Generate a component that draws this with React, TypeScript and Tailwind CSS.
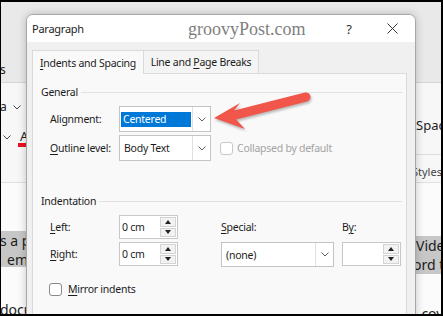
import React from 'react';

const Chevron = ({ color = '#5f5f5f' }: { color?: string }) => (
  <svg width="8" height="5" viewBox="0 0 8 5">
    <path d="M0.5 0.5 L4 4 L7.5 0.5" fill="none" stroke={color} strokeWidth="1" />
  </svg>
);

const Key = ({ children }: { children: React.ReactNode }) => (
  <span className="underline decoration-1 underline-offset-2">{children}</span>
);

const Dropdown = ({ value, width, selected }: { value: string; width: string; selected?: boolean }) => (
  <div className={`flex h-full ${width} border border-[#c4c4c4] bg-white`}>
    <div className="flex flex-1 items-center px-[1px]">
      {selected ? (
        <span className="flex h-[15px] w-full items-center bg-[#0078d7] pl-[2px] text-white">{value}</span>
      ) : (
        <span className="pl-[3px]">{value}</span>
      )}
    </div>
    <div className="flex w-[18px] items-center justify-center border-l border-[#e0e0e0]">
      <Chevron />
    </div>
  </div>
);

const Spin = ({ value }: { value: string }) => (
  <div className="flex h-[24px] w-[59px] border border-[#c8c8c8] bg-white">
    <div className="flex flex-1 items-center pl-[2px]">{value}</div>
    <div className="flex w-[18px] flex-col gap-[1px] p-[1px]">
      <div className="flex flex-1 items-center justify-center border border-[#d4d4d4] bg-[#f2f2f2]">
        <svg width="6" height="4" viewBox="0 0 6 4">
          <path d="M0 4 L3 0 L6 4 Z" fill="#222" />
        </svg>
      </div>
      <div className="flex flex-1 items-center justify-center border border-[#d4d4d4] bg-[#f2f2f2]">
        <svg width="6" height="4" viewBox="0 0 6 4">
          <path d="M0 0 L3 4 L6 0 Z" fill="#222" />
        </svg>
      </div>
    </div>
  </div>
);

const Checkbox = ({ disabled }: { disabled?: boolean }) => (
  <div
    className={`h-[13px] w-[13px] shrink-0 rounded-[3px] border bg-white ${disabled ? 'border-[#c8c8c8]' : 'border-[#8a8a8a]'}`}
  />
);

export default function App() {
  return (
    <div className="relative h-[316px] w-[443px] overflow-hidden border-t-2 border-r-2 border-b-2 border-l border-black bg-white font-['Noto_Sans',sans-serif] text-[#1c1c1c]">
      {/* Word window behind the dialog */}
      <div className="flex h-full flex-col">
        <div className="flex h-[81px] shrink-0 justify-between border-b border-[#d6d6d6] bg-[#e9e9e9] pt-[60px] text-[12px] leading-[16px]">
          <div className="w-[25px]">
            <span className="-ml-[1px]">s</span>
          </div>
          <div className="w-[26px]" />
        </div>

        <div className="flex h-[100px] shrink-0 justify-between border-b border-[#e0e0e0] bg-[#f7f7f7] text-[12px] leading-[16px]">
          <div className="flex w-[25px] flex-col pt-[16px]">
            <div className="flex items-center">
              <span className="-ml-[1px]">a</span>
              <span className="ml-[6px]">
                <Chevron color="#444" />
              </span>
            </div>
            <div className="mt-[14px] flex items-start">
              <span className="mt-[6px] ml-[2px]">
                <Chevron color="#444" />
              </span>
              <div className="ml-[9px] flex flex-col items-start">
                <span className="text-[13px] leading-[14px]">A</span>
                <div className="-ml-[2px] h-[4px] w-[12px] bg-[#e81123]" />
              </div>
            </div>
          </div>
          <div className="flex w-[26px] flex-col pt-[34px]">
            <span className="pl-[1px] text-[13px] leading-[16px] whitespace-nowrap">Spac</span>
            <div className="mt-[21px] h-px bg-[#dcdcdc]" />
            <span className="mt-[10px] -ml-[3px] text-[11px] leading-[14px] text-[#444]">Styles</span>
          </div>
        </div>

        <div className="flex flex-1 justify-between bg-[#fbfbfb] text-[14px] leading-[19px]">
          <div className="flex w-[25px] flex-col pt-[48px]">
            <div className="flex h-[36px] flex-col bg-[#c7c7c7] whitespace-nowrap">
              <span className="-ml-[1px]">s a p</span>
              <span className="pl-[6px]">em</span>
            </div>
            <span className="mt-[33px] -ml-[1px]">docu</span>
          </div>
          <div className="flex w-[26px] flex-col pt-[53px]">
            <div className="flex h-[38px] flex-col justify-center bg-[#c7c7c7] whitespace-nowrap">
              <span className="pl-[1px]">Vide</span>
              <span className="-ml-[2px]">ord t</span>
            </div>
            <span className="mt-[30px] -ml-[1px] whitespace-nowrap">, cov</span>
          </div>
        </div>
      </div>

      {/* Paragraph dialog */}
      <div className="absolute top-[12px] left-[25px] flex h-[330px] w-[390px] flex-col overflow-hidden rounded-t-[7px] border border-[#a8a8a8] bg-[#f0f0f0] text-[10.5px] leading-[14px] tracking-[-0.25px] shadow-[0_0_8px_rgba(0,0,0,0.22)]">
        <div className="flex h-[27px] shrink-0 items-center bg-white pl-[5px]">
          <span className="w-[156px] text-[11px]">Paragraph</span>
          <span className="font-['Liberation_Serif',serif] text-[18px] tracking-normal text-[#7f7f7f]">
            groovyPost.com
          </span>
          <div className="ml-auto flex h-full items-center">
            <span className="flex w-[40px] justify-center text-[13px] text-[#333]">?</span>
            <span className="flex w-[46px] justify-center">
              <svg width="11" height="11" viewBox="0 0 11 11">
                <path d="M0.5 0.5 L10.5 10.5 M10.5 0.5 L0.5 10.5" stroke="#333" strokeWidth="1" />
              </svg>
            </span>
          </div>
        </div>

        <div className="flex shrink-0 flex-col px-[5px] pt-[8px]">
          <div className="flex h-[24px] shrink-0">
            <div className="relative z-10 flex h-[24px] w-[112px] items-center justify-center border-t border-r border-l border-[#dadada] bg-[#f9f9f9]">
              <span>
                <Key>I</Key>ndents and Spacing
              </span>
            </div>
            <div className="flex h-[23px] w-[115px] items-center justify-center border-t border-r border-[#dadada] bg-[#f4f4f4]">
              <span>
                Line and <Key>P</Key>age Breaks
              </span>
            </div>
          </div>

          <div className="-mt-px flex h-[270px] w-[375px] shrink-0 flex-col border border-[#dadada] bg-[#f9f9f9] pr-[4px] pl-[8px]">
            {/* General */}
            <div className="mt-[11px] flex h-[14px] items-center gap-[3px]">
              <span>General</span>
              <div className="h-px flex-1 bg-[#e2e2e2]" />
            </div>
            <div className="mt-[7px] flex h-[26px] items-center pl-[9px]">
              <span className="w-[69px]">Alignment:</span>
              <Dropdown value="Centered" width="w-[92px]" selected />
            </div>
            <div className="mt-[3px] flex h-[26px] items-center pl-[9px]">
              <span className="w-[69px]">
                <Key>O</Key>utline level:
              </span>
              <Dropdown value="Body Text" width="w-[92px]" />
              <div className="ml-[9px] flex items-center gap-[4px] text-[#a3a3a3]">
                <Checkbox disabled />
                <span>Collapsed by default</span>
              </div>
            </div>

            {/* Indentation */}
            <div className="mt-[33px] flex h-[14px] items-center gap-[3px]">
              <span>Indentation</span>
              <div className="h-px flex-1 bg-[#e2e2e2]" />
            </div>
            <div className="mt-[7px] flex pl-[9px]">
              <div className="flex flex-col gap-[3px]">
                <div className="flex h-[24px] items-center">
                  <span className="w-[69px]">
                    <Key>L</Key>eft:
                  </span>
                  <Spin value="0 cm" />
                </div>
                <div className="flex h-[24px] items-center">
                  <span className="w-[69px]">
                    <Key>R</Key>ight:
                  </span>
                  <Spin value="0 cm" />
                </div>
              </div>
              <div className="ml-[43px] flex flex-col gap-[3px]">
                <span className="flex h-[24px] items-center">
                  <Key>S</Key>pecial:
                </span>
                <div className="h-[25px]">
                  <Dropdown value="(none)" width="w-[113px]" />
                </div>
              </div>
              <div className="ml-[8px] flex flex-col gap-[3px]">
                <span className="flex h-[24px] items-center">
                  B<Key>y</Key>:
                </span>
                <Spin value="" />
              </div>
            </div>

            <div className="mt-[15px] flex h-[14px] items-center gap-[6px] pl-[8px]">
              <Checkbox />
              <span>
                <Key>M</Key>irror indents
              </span>
            </div>
          </div>
        </div>
      </div>

      {/* Red callout arrow */}
      <svg
        className="pointer-events-none absolute -top-[2px] -left-px drop-shadow-[1px_2px_1px_rgba(0,0,0,0.25)]"
        width="443"
        height="316"
        viewBox="0 0 443 316"
      >
        <path
          d="M214 118 L240 103 L234 110.6 L304.9 92.6 A4.5 4.5 0 0 1 307.1 101.4 L236.1 119.4 L245 129 Z"
          fill="#f0564a"
        />
      </svg>
    </div>
  );
}
